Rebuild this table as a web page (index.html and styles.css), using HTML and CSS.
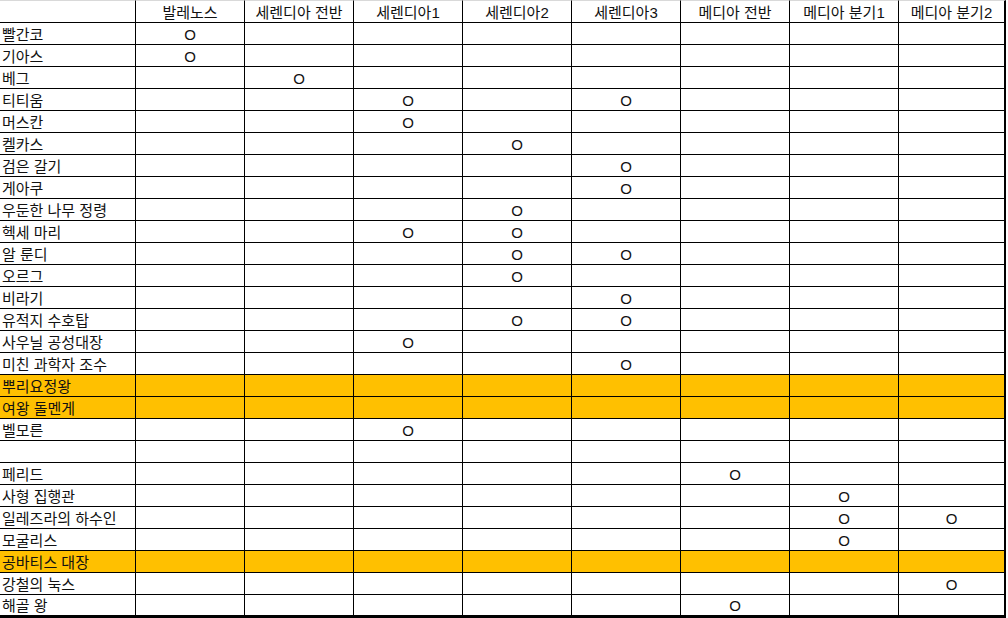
FILE: index.html
```html
<!DOCTYPE html>
<html lang="ko">
<head>
<meta charset="utf-8">
<title>Sheet</title>
<link rel="stylesheet" href="styles.css">
</head>
<body>
<div class="sheet">
<div class="c h name"></div><div class="c h">발레노스</div><div class="c h">세렌디아 전반</div><div class="c h">세렌디아1</div><div class="c h">세렌디아2</div><div class="c h">세렌디아3</div><div class="c h">메디아 전반</div><div class="c h">메디아 분기1</div><div class="c h last">메디아 분기2</div>

<div class="c name">빨간코</div><div class="c">O</div><div class="c"></div><div class="c"></div><div class="c"></div><div class="c"></div><div class="c"></div><div class="c"></div><div class="c last"></div>
<div class="c name">기아스</div><div class="c">O</div><div class="c"></div><div class="c"></div><div class="c"></div><div class="c"></div><div class="c"></div><div class="c"></div><div class="c last"></div>
<div class="c name">베그</div><div class="c"></div><div class="c">O</div><div class="c"></div><div class="c"></div><div class="c"></div><div class="c"></div><div class="c"></div><div class="c last"></div>
<div class="c name">티티움</div><div class="c"></div><div class="c"></div><div class="c">O</div><div class="c"></div><div class="c">O</div><div class="c"></div><div class="c"></div><div class="c last"></div>
<div class="c name">머스칸</div><div class="c"></div><div class="c"></div><div class="c">O</div><div class="c"></div><div class="c"></div><div class="c"></div><div class="c"></div><div class="c last"></div>
<div class="c name">켈카스</div><div class="c"></div><div class="c"></div><div class="c"></div><div class="c">O</div><div class="c"></div><div class="c"></div><div class="c"></div><div class="c last"></div>
<div class="c name">검은 갈기</div><div class="c"></div><div class="c"></div><div class="c"></div><div class="c"></div><div class="c">O</div><div class="c"></div><div class="c"></div><div class="c last"></div>
<div class="c name">게아쿠</div><div class="c"></div><div class="c"></div><div class="c"></div><div class="c"></div><div class="c">O</div><div class="c"></div><div class="c"></div><div class="c last"></div>
<div class="c name">우둔한 나무 정령</div><div class="c"></div><div class="c"></div><div class="c"></div><div class="c">O</div><div class="c"></div><div class="c"></div><div class="c"></div><div class="c last"></div>
<div class="c name">헥세 마리</div><div class="c"></div><div class="c"></div><div class="c">O</div><div class="c">O</div><div class="c"></div><div class="c"></div><div class="c"></div><div class="c last"></div>
<div class="c name">알 룬디</div><div class="c"></div><div class="c"></div><div class="c"></div><div class="c">O</div><div class="c">O</div><div class="c"></div><div class="c"></div><div class="c last"></div>
<div class="c name">오르그</div><div class="c"></div><div class="c"></div><div class="c"></div><div class="c">O</div><div class="c"></div><div class="c"></div><div class="c"></div><div class="c last"></div>
<div class="c name">비라기</div><div class="c"></div><div class="c"></div><div class="c"></div><div class="c"></div><div class="c">O</div><div class="c"></div><div class="c"></div><div class="c last"></div>
<div class="c name">유적지 수호탑</div><div class="c"></div><div class="c"></div><div class="c"></div><div class="c">O</div><div class="c">O</div><div class="c"></div><div class="c"></div><div class="c last"></div>
<div class="c name">사우닐 공성대장</div><div class="c"></div><div class="c"></div><div class="c">O</div><div class="c"></div><div class="c"></div><div class="c"></div><div class="c"></div><div class="c last"></div>
<div class="c name">미친 과학자 조수</div><div class="c"></div><div class="c"></div><div class="c"></div><div class="c"></div><div class="c">O</div><div class="c"></div><div class="c"></div><div class="c last"></div>
<div class="c name hl">뿌리요정왕</div><div class="c hl"></div><div class="c hl"></div><div class="c hl"></div><div class="c hl"></div><div class="c hl"></div><div class="c hl"></div><div class="c hl"></div><div class="c hl last"></div>
<div class="c name hl">여왕 돌멘게</div><div class="c hl"></div><div class="c hl"></div><div class="c hl"></div><div class="c hl"></div><div class="c hl"></div><div class="c hl"></div><div class="c hl"></div><div class="c hl last"></div>
<div class="c name">벨모른</div><div class="c"></div><div class="c"></div><div class="c">O</div><div class="c"></div><div class="c"></div><div class="c"></div><div class="c"></div><div class="c last"></div>
<div class="c name"></div><div class="c"></div><div class="c"></div><div class="c"></div><div class="c"></div><div class="c"></div><div class="c"></div><div class="c"></div><div class="c last"></div>
<div class="c name">페리드</div><div class="c"></div><div class="c"></div><div class="c"></div><div class="c"></div><div class="c"></div><div class="c">O</div><div class="c"></div><div class="c last"></div>
<div class="c name">사형 집행관</div><div class="c"></div><div class="c"></div><div class="c"></div><div class="c"></div><div class="c"></div><div class="c"></div><div class="c">O</div><div class="c last"></div>
<div class="c name">일레즈라의 하수인</div><div class="c"></div><div class="c"></div><div class="c"></div><div class="c"></div><div class="c"></div><div class="c"></div><div class="c">O</div><div class="c last">O</div>
<div class="c name">모굴리스</div><div class="c"></div><div class="c"></div><div class="c"></div><div class="c"></div><div class="c"></div><div class="c"></div><div class="c">O</div><div class="c last"></div>
<div class="c name hl">공바티스 대장</div><div class="c hl"></div><div class="c hl"></div><div class="c hl"></div><div class="c hl"></div><div class="c hl"></div><div class="c hl"></div><div class="c hl"></div><div class="c hl last"></div>
<div class="c name">강철의 눅스</div><div class="c"></div><div class="c"></div><div class="c"></div><div class="c"></div><div class="c"></div><div class="c"></div><div class="c"></div><div class="c last">O</div>
<div class="c name b">해골 왕</div><div class="c b"></div><div class="c b"></div><div class="c b"></div><div class="c b"></div><div class="c b"></div><div class="c b">O</div><div class="c b"></div><div class="c b last"></div>
</div>
</body>
</html>
```

FILE: styles.css
```css
html, body {
  margin: 0;
  padding: 0;
  background: #ffffff;
}

.sheet {
  display: grid;
  grid-template-columns: 136px repeat(7, 109px) 107px;
  grid-template-rows: 23px repeat(26, 22px) 23px;
  width: 1006px;
  font-family: "Liberation Sans", "Noto Sans CJK KR", sans-serif;
  font-size: 15px;
  font-weight: 400;
  color: #111;
}

.c {
  box-sizing: border-box;
  border-right: 1px solid #000;
  border-bottom: 1px solid #000;
  display: flex;
  align-items: center;
  justify-content: center;
  line-height: 1;
  padding-top: 1px;
  white-space: nowrap;
  overflow: hidden;
}

.h {
  border-top: 1px solid #d9d9d9;
}

.name {
  justify-content: flex-start;
  padding-left: 2px;
}

.last {
  border-right: 2px solid #000;
}

.hl {
  background: #ffc000;
}

.b {
  border-bottom: 3px solid #000;
}
```
